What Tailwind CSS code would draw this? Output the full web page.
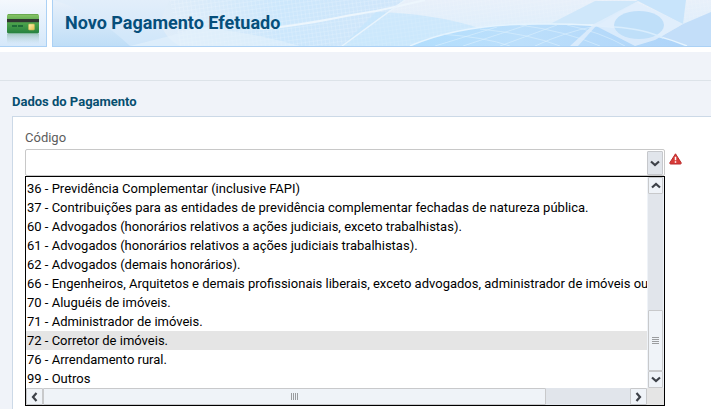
<!DOCTYPE html>
<html lang="pt-BR">
<head>
<meta charset="utf-8">
<meta name="viewport" content="width=device-width, initial-scale=1">
<title>Novo Pagamento Efetuado</title>
<script src="https://cdn.jsdelivr.net/npm/@tailwindcss/browser@4"></script>
</head>
<body class="flex min-h-screen flex-col overflow-hidden bg-[#f0f3f9] font-[Roboto,sans-serif] text-[13px] leading-[19px] text-black">
<header class="flex h-[52px] gap-[5px] bg-white pb-[5px]">
  <div class="flex w-[47px] shrink-0 items-start border-r border-b border-[#abd1f5] bg-linear-to-b from-[#f4f8fd] to-[#d5e8fa] pt-[13px] pl-[6px]">
    <svg width="34" height="32" viewBox="0 0 34 32" aria-hidden="true">
      <defs>
        <linearGradient id="card" x2="0" y2="1"><stop stop-color="#8cc668"/><stop offset=".45" stop-color="#4da34c"/><stop offset="1" stop-color="#26813f"/></linearGradient>
        <linearGradient id="refl" x2="0" y2="1"><stop stop-color="#78aa98" stop-opacity=".55"/><stop offset="1" stop-color="#b0d0d8" stop-opacity="0"/></linearGradient>
        <linearGradient id="chip" x2="1" y2="1"><stop stop-color="#fff5b0"/><stop offset="1" stop-color="#e2b94b"/></linearGradient>
      </defs>
      <rect x="1" y="21" width="32" height="10" fill="url(#refl)"/>
      <rect x="1" y="1" width="32" height="19.500" rx="1.500" fill="url(#card)"/>
      <path d="M2 1.500H32" stroke="#69a950"/>
      <rect x="1" y="6" width="32" height="3.200" fill="#303632"/>
      <path d="M6 13H17" stroke="#1f6b38" stroke-width="2" stroke-dasharray="5 1"/>
      <rect x="22.500" y="11" width="6" height="6" rx="1" fill="url(#chip)" stroke="#b5b950" stroke-width=".6"/>
    </svg>
  </div>
  <div class="relative flex min-w-0 flex-1 items-center overflow-hidden border-b border-l border-[#abd1f5] bg-[#dcecfa] pl-3">
    <svg class="absolute inset-0 h-full w-full" viewBox="53 0 658 46" preserveAspectRatio="none" aria-hidden="true">
      <defs>
        <linearGradient id="base" x2="0" y2="1"><stop stop-color="#e2eefa"/><stop offset="1" stop-color="#cfe6fa"/></linearGradient>
        <linearGradient id="left" x2="0" y2="1"><stop stop-color="#e8f0fa"/><stop offset="1" stop-color="#bfdef7"/></linearGradient>
        <linearGradient id="pale" x2="0" y2="1"><stop stop-color="#e8f0fa"/><stop offset="1" stop-color="#d9edfc"/></linearGradient>
        <linearGradient id="wave"><stop stop-color="#e0edf9"/><stop offset=".5" stop-color="#cce7fc"/><stop offset="1" stop-color="#d0e6fa"/></linearGradient>
        <linearGradient id="arc"><stop stop-color="#b2defd"/><stop offset=".4" stop-color="#bcdffb"/><stop offset="1" stop-color="#aed4f9"/></linearGradient>
        <pattern id="grid" width="4" height="4" patternUnits="userSpaceOnUse" patternTransform="rotate(-8)"><path d="M0 0H4M0 0V4" stroke="#fff" stroke-width=".6" opacity=".5"/></pattern>
      </defs>
      <rect x="53" width="658" height="46" fill="url(#base)"/>
      <path d="M53 0C84 9 109 26 130 46H53Z" fill="url(#left)"/>
      <path d="M170 0H405L342 46H180Q150 30 170 0Z" fill="url(#wave)"/>
      <path d="M170 0H405L342 46H180Z" fill="url(#grid)"/>
      <path d="M200 27Q255 33 300 46H130Q165 38 200 27Z" fill="#e4f1fc" opacity=".6"/>
      <path d="M405 0H711V46H342Z" fill="url(#pale)"/>
      <path d="M376 12Q450 14 500 36L410 46H342Z" fill="#c5e5fc" opacity=".7"/>
      <path d="M405 0H711V46H342Z" fill="url(#grid)" opacity=".5"/>
      <path d="M260 29C305 26 340 16 376 11Q400 6 425 0" fill="none" stroke="#edf6fd" stroke-width="2"/>
      <path d="M405 0L342 46" stroke="#e9f4fd" stroke-width="1.500"/>
      <path d="M595 1H638L600 24H550Z" fill="#cfe7fa"/>
      <path d="M636 0H686L683 24Z" fill="#c8e4fb"/>
      <path d="M711 12L683 24L655 40L670 46H711Z" fill="#c3def9"/>
      <path d="M410 46C450 28 500 23 550 24C610 24 650 31 687 46Z" fill="url(#arc)"/>
      <path d="M410 46C450 28 500 23 550 24C610 24 650 31 687 46" fill="none" stroke="#e6f4fe" stroke-width="1.500"/>
      <path d="M435 46L497 27M463 46L527 25M500 46L557 25M535 46Q565 32 596 26M480 29Q530 34 560 46M520 25Q565 31 600 46M567 25Q600 32 625 46M440 34Q485 37 510 46" fill="none" stroke="#dcf0fe" stroke-width="1" opacity=".6"/>
      <path d="M636 2L683 24L655 40L635 46L596 26L578 46H570L594 24Z" fill="#dfedfb" opacity=".85"/>
      <ellipse cx="639" cy="25" rx="25" ry="14" fill="#bfdff9"/>
      <path d="M614 27Q645 29 663 38" fill="none" stroke="#d9edfd" stroke-width="1.500"/>
    </svg>
    <h1 class="relative text-[18px] leading-6 font-bold whitespace-nowrap text-[#064f7b]">Novo Pagamento Efetuado</h1>
  </div>
</header>
<div class="h-[29px] shrink-0 border-b border-[#dde3e9]"></div>
<main class="flex flex-1 flex-col pt-[11px] pl-3">
  <h2 class="font-bold text-[#064f70]">Dados do Pagamento</h2>
  <section class="mt-[5px] flex-1 border-t border-l border-[#ccd9e7] bg-white pt-[11px] pr-[29px] pl-3">
    <label for="codigo" class="block text-[#5c5c5c]">Código</label>
    <div class="mt-[2px] flex items-start gap-1">
      <div class="relative min-w-0 flex-1">
        <select id="codigo" class="block h-[27px] w-full appearance-none rounded-[2px] border border-[#c8c8c8] bg-white px-1 outline-none"><option></option></select>
        <span class="pointer-events-none absolute top-[2px] right-[2px] flex h-6 w-4 items-center justify-center rounded-[1px] border border-[#c6c8cc] bg-[#e1e5eb]">
          <svg width="10" height="7" viewBox="0 0 10 7" class="shrink-0" aria-hidden="true"><path d="M1 1.500L5 5L9 1.500" fill="none" stroke="#3d4148" stroke-width="2.200"/></svg>
        </span>
        <div class="absolute inset-x-0 top-full grid grid-cols-[minmax(0,1fr)_17px] border border-black bg-white">
          <ul role="listbox" aria-label="Código" class="overflow-hidden pt-[2px] whitespace-nowrap [&>li]:px-[1px]">
            <li role="option">36 - Previdência Complementar (inclusive FAPI)</li>
            <li role="option">37 - Contribuições para as entidades de previdência complementar fechadas de natureza pública.</li>
            <li role="option">60 - Advogados (honorários relativos a ações judiciais, exceto trabalhistas).</li>
            <li role="option">61 - Advogados (honorários relativos a ações judiciais trabalhistas).</li>
            <li role="option">62 - Advogados (demais honorários).</li>
            <li role="option">66 - Engenheiros, Arquitetos e demais profissionais liberais, exceto advogados, administrador de imóveis ou corretor</li>
            <li role="option">70 - Aluguéis de imóveis.</li>
            <li role="option">71 - Administrador de imóveis.</li>
            <li role="option" aria-selected="true" class="bg-[#e5e5e5]">72 - Corretor de imóveis.</li>
            <li role="option">76 - Arrendamento rural.</li>
            <li role="option">99 - Outros</li>
          </ul>
          <div class="flex flex-col border-x border-[#eff3f8] bg-[#e1e5eb]">
            <button type="button" aria-label="Rolar para cima" class="flex h-[17px] items-center justify-center rounded-[1px] border border-[#c8c9cb] bg-[#eff3f8]">
              <svg class="shrink-0" width="10" height="7" viewBox="0 0 10 7" aria-hidden="true"><path d="M1 5.500L5 2L9 5.500" fill="none" stroke="#3d4148" stroke-width="2.200"/></svg>
            </button>
            <div class="mt-auto flex h-[61px] items-center justify-center rounded-[1px] border border-[#c8c9cb] bg-[#eff3f8]">
              <svg width="7" height="8" viewBox="0 0 7 8" aria-hidden="true"><path d="M0 .5H7M0 2.500H7M0 4.500H7M0 6.500H7" stroke="#9a9c9f"/></svg>
            </div>
            <button type="button" aria-label="Rolar para baixo" class="flex h-[17px] items-center justify-center rounded-[1px] border border-[#c8c9cb] bg-[#eff3f8]">
              <svg class="shrink-0" width="10" height="7" viewBox="0 0 10 7" aria-hidden="true"><path d="M1 1.500L5 5L9 1.500" fill="none" stroke="#3d4148" stroke-width="2.200"/></svg>
            </button>
          </div>
          <div class="flex h-[17px] bg-[#e1e5eb]">
            <button type="button" aria-label="Rolar para a esquerda" class="flex w-[17px] items-center justify-center rounded-[1px] border border-[#c8c9cb] bg-[#eff3f8]">
              <svg width="7" height="10" viewBox="0 0 7 10" aria-hidden="true"><path d="M5.500 1L2 5L5.500 9" fill="none" stroke="#3d4148" stroke-width="2.200"/></svg>
            </button>
            <div class="flex w-[81%] items-center justify-center rounded-[1px] border border-[#c8c9cb] bg-[#eff3f8]">
              <svg width="8" height="7" viewBox="0 0 8 7" aria-hidden="true"><path d="M.5 0V7M2.500 0V7M4.500 0V7M6.500 0V7" stroke="#9a9c9f"/></svg>
            </div>
            <button type="button" aria-label="Rolar para a direita" class="ml-auto flex w-[17px] items-center justify-center rounded-[1px] border border-[#c8c9cb] bg-[#eff3f8]">
              <svg width="7" height="10" viewBox="0 0 7 10" aria-hidden="true"><path d="M1.500 1L5 5L1.500 9" fill="none" stroke="#3d4148" stroke-width="2.200"/></svg>
            </button>
          </div>
          <div class="bg-[#e5e5e5]"></div>
        </div>
      </div>
      <svg class="mt-1 shrink-0" width="13" height="12" viewBox="0 0 13 12" role="img" aria-label="Campo obrigatório">
        <path d="M6.500 .8L12.200 9.800Q12.500 10.900 11.400 11H1.600Q.5 10.900 .8 9.800Z" fill="#d83b38" stroke="#b92b2c" stroke-width="1" stroke-linejoin="round"/>
        <path d="M6.500 3.800V7.300M6.500 8.300V9.800" stroke="#fff" stroke-width="1.500"/>
      </svg>
    </div>
  </section>
</main>
</body>
</html>
